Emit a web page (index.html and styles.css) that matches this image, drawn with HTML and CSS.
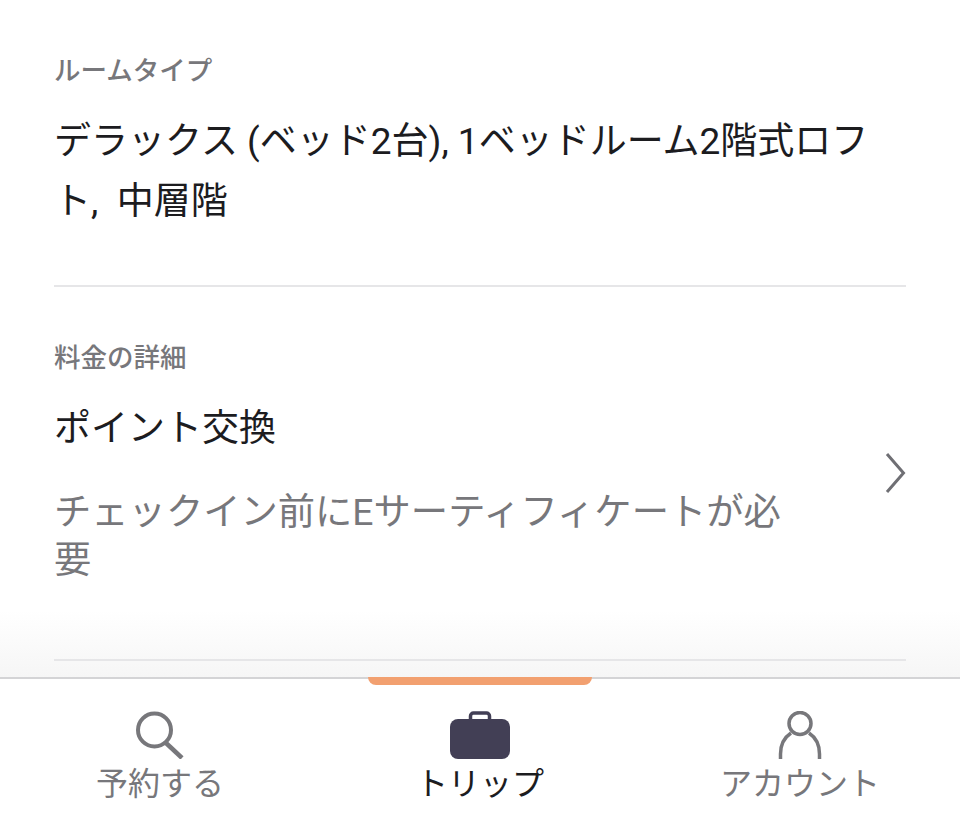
FILE: index.html
```html
<!DOCTYPE html>
<html lang="ja">
<head>
<meta charset="utf-8">
<title>トリップ</title>
<link rel="stylesheet" href="styles.css">
</head>
<body>
<main class="content">
  <section class="section room">
    <h2 class="label">ルームタイプ</h2>
    <p class="value">デラックス (ベッド2台), 1ベッドルーム2階式ロフト,&nbsp; 中層階</p>
  </section>
  <section class="section pay">
    <h2 class="label">料金の詳細</h2>
    <div class="row">
      <div class="row-text">
        <p class="value">ポイント交換</p>
        <p class="note">チェックイン前にEサーティフィケートが必要</p>
      </div>
      <svg class="chev" viewBox="0 0 22 44" width="22" height="44"><path d="M3 3 L19.5 22 L3 41" fill="none" stroke="#6f6f74" stroke-width="3"/></svg>
    </div>
  </section>
</main>
<nav class="tabs">
  <span class="marker"></span>
  <div class="tab">
    <svg viewBox="0 0 48 48" width="48" height="48"><circle cx="18.500" cy="19" r="16.500" fill="none" stroke="#77777b" stroke-width="4"/><path d="M30 32 L46 47" stroke="#77777b" stroke-width="4.500" fill="none"/></svg>
    <span>予約する</span>
  </div>
  <div class="tab active">
    <svg viewBox="0 0 60 48" width="60" height="48"><path d="M20.500 10 V5 a3 3 0 0 1 3-3 H36.500 a3 3 0 0 1 3 3 V10" fill="none" stroke="#423f55" stroke-width="3.500"/><rect y="8" width="60" height="40" rx="8" fill="#423f55"/></svg>
    <span>トリップ</span>
  </div>
  <div class="tab">
    <svg viewBox="0 0 44 48" width="44" height="48"><circle cx="22" cy="12.500" r="11" fill="none" stroke="#77777b" stroke-width="3.500"/><path d="M2.500 48 V43 C2.500 33 7 26 13 22 M41.500 48 V43 C41.500 33 37 26 31 22" fill="none" stroke="#77777b" stroke-width="3.500"/></svg>
    <span>アカウント</span>
  </div>
</nav>
</body>
</html>
```
FILE: styles.css
```css
* { box-sizing: border-box; }
html, body { margin: 0; padding: 0; }
body {
  width: 960px;
  height: 819px;
  overflow: hidden;
  background: #fff;
  font-family: Roboto, "Noto Sans CJK JP", "Liberation Sans", sans-serif;
  display: flex;
  flex-direction: column;
}
.content { flex: 1; padding: 0 54px; background: linear-gradient(#fff 610px, #f6f6f6 677px); min-height: 0; }
.section { border-bottom: 2px solid #e6e6e8; }
.room { padding-top: 53px; height: 287px; }
.pay { padding-top: 53px; height: 374px; }
.label { margin: 0; font-size: 26.500px; line-height: 36px; font-weight: 500; color: #77777b; }
.value { margin: 0; font-size: 37px; line-height: 60px; color: #1c1c1f; font-weight: 400; }
.room .value { margin-top: 23px; width: 825px; }
.pay .value { margin-top: 23px; }
.row { display: flex; align-items: center; justify-content: space-between; }
.row-text { width: 740px; }
.note { margin: 29px 0 0; font-size: 37.300px; line-height: 48px; color: #77777b; }
.chev { margin-top: -14px; }
.tabs { position: relative; flex: 0 0 142px; display: grid; grid-template-columns: 320px 320px 320px; border-top: 2px solid #d4d4d6; background: #fff; }
.marker { position: absolute; left: 368px; top: -2px; width: 224px; height: 8px; background: #f2a070; border-radius: 0 0 8px 8px; }
.tab { display: flex; flex-direction: column; align-items: center; padding-top: 32px; font-size: 32px; line-height: 44px; color: #77777b; }
.tab svg { display: block; margin-bottom: 3px; }
.tab.active { color: #1c1c1f; }
```
